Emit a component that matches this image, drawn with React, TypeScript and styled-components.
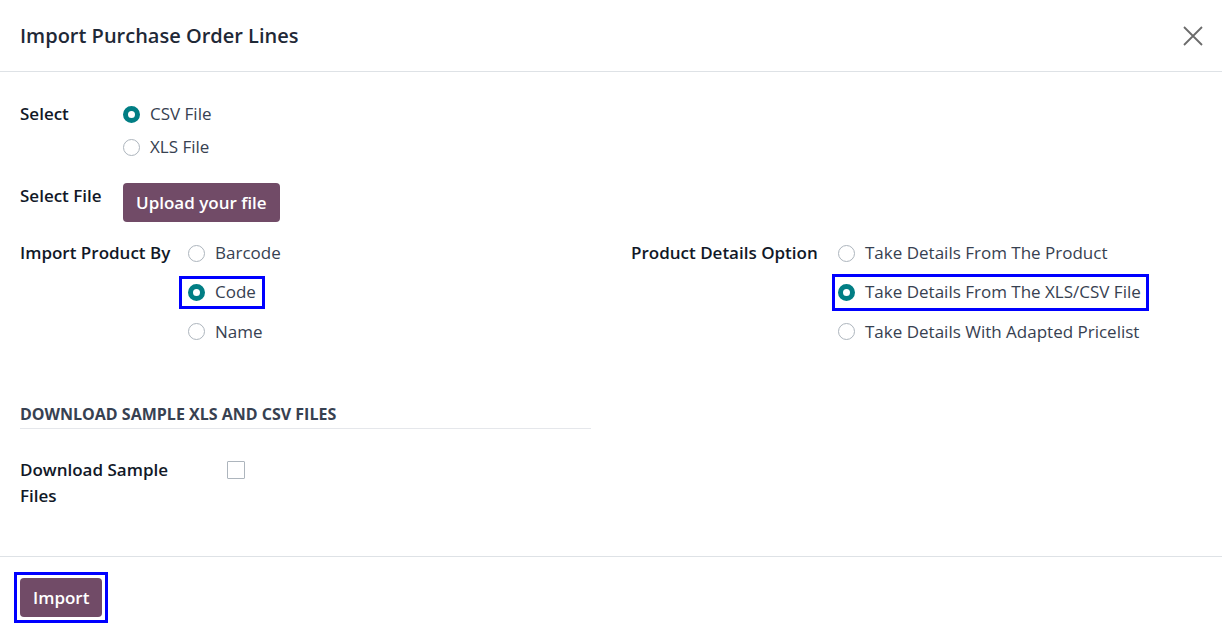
import React from "react";
import styled, { createGlobalStyle } from "styled-components";

const Global = createGlobalStyle`
  html, body { margin: 0; padding: 0; background: #fff; }
  body { font-family: "Open Sans", "Noto Sans", sans-serif; color: #111827; }
  * { box-sizing: border-box; }
`;

const Dialog = styled.div`
  width: 1222px;
  height: 636px;
  display: flex;
  flex-direction: column;
  background: #fff;
`;

const Header = styled.div`
  height: 72px;
  border-bottom: 1px solid #dee2e6;
  display: flex;
  align-items: center;
  justify-content: space-between;
  padding: 0 17px 0 20px;
`;

const Title = styled.h4`
  margin: 0;
  font-size: 20px;
  font-weight: 600;
  color: #1f2937;
`;

const Close = styled.button`
  border: 0;
  background: none;
  padding: 0;
  width: 24px;
  height: 24px;
  display: flex;
  align-items: center;
  justify-content: center;
  cursor: pointer;
`;

const Body = styled.div`
  flex: 1;
  padding: 29px 20px 0 20px;
  display: flex;
  flex-direction: column;
`;

const Row = styled.div<{ $label: number; $mt?: number }>`
  display: grid;
  grid-template-columns: ${(p) => p.$label}px 1fr;
  margin-top: ${(p) => p.$mt ?? 0}px;
  align-items: start;
`;

const Label = styled.div`
  font-size: 17px;
  font-weight: 600;
  color: #111827;
  line-height: 26px;
`;

const Options = styled.div<{ $gap: number }>`
  display: flex;
  flex-direction: column;
  align-items: flex-start;
  gap: ${(p) => p.$gap}px;
`;

const Option = styled.label`
  display: inline-flex;
  align-items: center;
  gap: 10px;
  font-size: 17px;
  color: #374151;
  line-height: 26px;
`;

const Highlight = styled.div<{ $pl: number; $pr: number; $py: number }>`
  border: 3px solid #0000ff;
  padding: ${(p) => p.$py}px ${(p) => p.$pr}px ${(p) => p.$py}px ${(p) => p.$pl}px;
  margin: ${(p) => -(p.$py + 3)}px 0 ${(p) => -(p.$py + 3)}px ${(p) => -(p.$pl + 3)}px;
`;

const Radio = styled.span<{ $on?: boolean }>`
  width: 17px;
  height: 17px;
  border-radius: 50%;
  flex: none;
  background: #fff;
  border: ${(p) => (p.$on ? "5px solid #017e84" : "1px solid #adb5bd")};
`;

const PrimaryButton = styled.button`
  background: #714b67;
  color: #fff;
  border: 0;
  border-radius: 4px;
  font-family: inherit;
  font-size: 17px;
  font-weight: 600;
  height: 39px;
  padding: 0 13px;
  cursor: pointer;
`;

const ButtonFrame = styled.div`
  display: inline-block;
  border: 3px solid #0000ff;
  padding: 3px;
  margin: -6px 0 0 -6px;
  line-height: 0;
`;

const TwoCol = styled.div`
  display: grid;
  grid-template-columns: 611px 1fr;
  margin-top: 18px;
`;

const SectionTitle = styled.div`
  margin-top: 59px;
  width: 571px;
  font-size: 16px;
  font-weight: 700;
  text-transform: uppercase;
  color: #374151;
  padding-bottom: 4px;
  border-bottom: 1px solid #e5e7eb;
  line-height: 20px;
`;

const Checkbox = styled.span`
  width: 18px;
  height: 18px;
  border: 1px solid #adb5bd;
  border-radius: 1px;
  margin-top: 4px;
  display: block;
`;

const NarrowLabel = styled(Label)`
  width: 160px;
`;

const Footer = styled.div`
  height: 80px;
  border-top: 1px solid #dee2e6;
  padding: 21px 20px 0 20px;
`;

export default function App() {
  return (
    <>
      <Global />
      <Dialog>
        <Header>
          <Title>Import Purchase Order Lines</Title>
          <Close aria-label="Close">
            <svg width="20" height="20" viewBox="0 0 20 20">
              <path d="M1 1L19 19M19 1L1 19" stroke="#6b6b6b" strokeWidth="1.8" />
            </svg>
          </Close>
        </Header>
        <Body>
          <Row $label={103}>
            <Label>Select</Label>
            <Options $gap={7}>
              <Option>
                <Radio $on />
                CSV File
              </Option>
              <Option>
                <Radio />
                XLS File
              </Option>
            </Options>
          </Row>
          <Row $label={103} $mt={23}>
            <Label>Select File</Label>
            <div>
              <PrimaryButton>Upload your file</PrimaryButton>
            </div>
          </Row>
          <TwoCol>
            <Row $label={168}>
              <Label>Import Product By</Label>
              <Options $gap={13}>
                <Option>
                  <Radio />
                  Barcode
                </Option>
                <Highlight $pl={6} $pr={6} $py={0}>
                  <Option>
                    <Radio $on />
                    Code
                  </Option>
                </Highlight>
                <Option>
                  <Radio />
                  Name
                </Option>
              </Options>
            </Row>
            <Row $label={207}>
              <Label>Product Details Option</Label>
              <Options $gap={13}>
                <Option>
                  <Radio />
                  Take Details From The Product
                </Option>
                <Highlight $pl={3} $pr={5} $py={2}>
                  <Option>
                    <Radio $on />
                    Take Details From The XLS/CSV File
                  </Option>
                </Highlight>
                <Option>
                  <Radio />
                  Take Details With Adapted Pricelist
                </Option>
              </Options>
            </Row>
          </TwoCol>
          <SectionTitle>Download Sample XLS and CSV Files</SectionTitle>
          <Row $label={207} $mt={28}>
            <NarrowLabel>Download Sample Files</NarrowLabel>
            <Checkbox />
          </Row>
        </Body>
        <Footer>
          <ButtonFrame>
            <PrimaryButton>Import</PrimaryButton>
          </ButtonFrame>
        </Footer>
      </Dialog>
    </>
  );
}
